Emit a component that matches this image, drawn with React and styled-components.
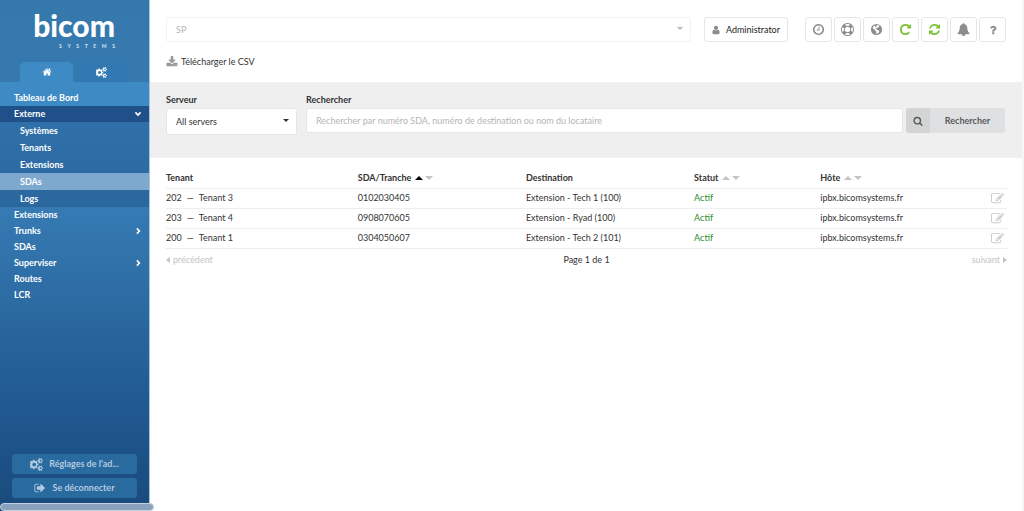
import React, { useState } from "react";
import styled, { createGlobalStyle } from "styled-components";

const colors = {
  text: "#333333",
  muted: "#999999",
  border: "#e6e6e6",
  line: "#eeeeee",
  panel: "#efefef",
  green: "#7cc433",
  active: "#2f8a2f",
};

const GlobalStyle = createGlobalStyle`
  * {
    box-sizing: border-box;
  }

  body {
    margin: 0;
    background: #ffffff;
    color: ${colors.text};
    font-family: Lato, "Liberation Sans", sans-serif;
    font-size: 9px;
    line-height: 16px;
  }

  button,
  input,
  select {
    font: inherit;
    color: inherit;
  }

  a {
    color: inherit;
    text-decoration: none;
  }
`;

const Page = styled.div`
  display: flex;
  min-height: 100vh;
`;

/* ---------- Sidebar ---------- */

const Sidebar = styled.aside`
  position: relative;
  flex: 0 0 150px;
  display: flex;
  flex-direction: column;
  padding-bottom: 13px;
  border-right: 1px solid #a9c4de;
  background: linear-gradient(#3578ac 0%, #367bb4 40%, #2c6aa2 60%, #215a92 78%, #194a7c 100%);
  color: #ffffff;
  font-weight: 700;
`;

const Logo = styled.a`
  display: flex;
  flex-direction: column;
  align-items: flex-end;
  margin: 7px 34px 0 0;
  font-size: 30px;
  font-weight: 900;
  line-height: 36px;
`;

const LogoSub = styled.span`
  display: flex;
  justify-content: space-between;
  width: 56px;
  font-size: 5px;
  font-weight: 700;
  line-height: 6px;
  opacity: 0.8;
`;

const Tabs = styled.div`
  display: flex;
  gap: 2px;
  padding: 0 21px 0 20px;
  margin-top: 13px;
`;

const Tab = styled.button`
  flex: 1;
  height: 20px;
  padding: 0;
  border: 0;
  border-radius: 5px 5px 0 0;
  background: ${(props) => (props.$active ? "#3e8ac4" : "#3379b1")};
  display: flex;
  align-items: center;
  justify-content: center;
  cursor: pointer;
`;

const Menu = styled.ul`
  list-style: none;
  margin: 0;
  padding: 0;
`;

const MenuLink = styled.a`
  display: flex;
  align-items: center;
  justify-content: space-between;
  height: ${(props) => (props.$home ? 24 : 16)}px;
  padding: ${(props) => (props.$home ? "8px 7px 0 14px" : "0 7px 0 14px")};
  background: ${(props) =>
    props.$home ? "#3e8ac4" : props.$open ? "#20508a" : "transparent"};
`;

const SubMenu = styled(Menu)`
  background: linear-gradient(#3070aa, #2a679e);
`;

const SubLink = styled.a`
  display: block;
  height: 17px;
  line-height: 17px;
  padding-left: 20px;
  background: ${(props) => (props.$current ? "#7ea9cf" : "transparent")};
`;

const SideActions = styled.div`
  display: flex;
  flex-direction: column;
  gap: 4px;
  margin-top: auto;
  padding: 0 12px;
`;

const SideButton = styled.button`
  display: flex;
  align-items: center;
  justify-content: center;
  gap: 6px;
  height: 20px;
  padding: 0;
  border: 0;
  border-radius: 3px;
  background: #296a9f;
  color: #b3cbe0;
  font-weight: 700;
  cursor: pointer;
`;

// horizontal scroll thumb, runs slightly past the sidebar
const ScrollThumb = styled.div`
  position: absolute;
  left: 0;
  right: -5px;
  bottom: 0;
  height: 8px;
  border: 1px solid #c3d0de;
  border-radius: 4px;
  background: #8aa2bd;
`;

/* ---------- Top bar ---------- */

const Main = styled.main`
  flex: 1;
  min-width: 0;
  border-right: 2px solid #f7f7f7;
`;

const TopBar = styled.header`
  display: flex;
  align-items: center;
  padding: 17px 16px 0;
`;

const SelectBox = styled.div`
  position: relative;
  flex: ${(props) => (props.$wide ? "1" : "0 0 131px")};
  color: ${(props) => (props.$wide ? "#b5b5b5" : colors.text)};
`;

const Select = styled.select`
  appearance: none;
  display: block;
  width: 100%;
  height: ${(props) => (props.$wide ? 25 : 27)}px;
  padding: 0 20px 0 9px;
  border: 1px solid ${(props) => (props.$wide ? "#f2f2f2" : colors.border)};
  border-radius: 3px;
  background: #ffffff;
  opacity: 1;
`;

const Caret = styled.span`
  position: absolute;
  top: 50%;
  right: 8px;
  margin-top: -3px;
  border: 3px solid transparent;
  border-top-color: currentColor;
  border-bottom: 0;
  pointer-events: none;
`;

const UserButton = styled.button`
  display: flex;
  align-items: center;
  gap: 5px;
  height: 25px;
  margin: 0 17px 0 13px;
  padding: 0 7px 0 6px;
  border: 1px solid ${colors.border};
  border-radius: 3px;
  background: #ffffff;
  color: #222222;
  cursor: pointer;

  svg {
    color: #8c8c8c;
  }
`;

const Tools = styled.div`
  display: flex;
  gap: 2px;
`;

const ToolButton = styled.button`
  display: flex;
  align-items: center;
  justify-content: center;
  width: 27px;
  height: 25px;
  padding: 0;
  border: 1px solid ${colors.border};
  border-radius: 3px;
  background: #ffffff;
  color: ${(props) => (props.$green ? colors.green : "#8c8c8c")};
  cursor: pointer;
`;

const Download = styled.a`
  display: inline-flex;
  align-items: center;
  gap: 3px;
  margin: 12px 16px;

  svg {
    color: ${colors.muted};
  }
`;

/* ---------- Search ---------- */

const SearchForm = styled.form`
  display: flex;
  align-items: flex-start;
  padding: 10px 17px 23px 16px;
  background: ${colors.panel};
`;

const Field = styled.div`
  flex: ${(props) => (props.$grow ? "1" : "0 0 131px")};
  margin-right: ${(props) => (props.$grow ? 3 : 9)}px;
`;

const Label = styled.label`
  display: block;
  font-weight: 700;
`;

const SearchInput = styled.input`
  display: block;
  width: 100%;
  height: 25px;
  padding: 0 9px;
  border: 1px solid ${colors.border};
  border-radius: 3px;
  background: #ffffff;

  &::placeholder {
    color: #b5b5b5;
  }
`;

const SearchButton = styled.button`
  display: flex;
  align-items: center;
  width: 99px;
  height: 25px;
  margin-top: 16px;
  padding: 0;
  border: 0;
  border-radius: 3px;
  overflow: hidden;
  background: #dfe0e1;
  color: #5a5a5a;
  font-weight: 700;
  cursor: pointer;

  span {
    flex: 1;
  }
`;

const SearchIcon = styled.i`
  display: flex;
  align-items: center;
  justify-content: center;
  width: 24px;
  height: 100%;
  background: #d3d4d4;
`;

/* ---------- Table ---------- */

const Results = styled.section`
  padding: 10px 15px 0 16px;
`;

const Table = styled.table`
  width: 100%;
  table-layout: fixed;
  border-collapse: collapse;

  th,
  td {
    height: 20px;
    padding: 0;
    border-bottom: 1px solid ${colors.line};
    text-align: left;
    white-space: nowrap;
  }
`;

const Th = styled.th`
  width: ${(props) => props.$width};
  font-weight: 700;
`;

const Sort = styled.span`
  display: inline-block;
  margin-left: ${(props) => (props.$down ? 2 : 4)}px;
  vertical-align: middle;
  border: 4px solid transparent;
  border-width: ${(props) => (props.$down ? "4px 4px 0" : "0 4px 4px")};
  border-top-color: ${(props) => (props.$down ? "#c4c4c4" : "transparent")};
  border-bottom-color: ${(props) => (props.$on ? "#000000" : "#c4c4c4")};
`;

const Dash = styled.span`
  margin: 0 5px;
`;

const Status = styled.span`
  color: ${colors.active};
`;

const EditLink = styled.a`
  display: flex;
  justify-content: flex-end;
  padding-right: 3px;
  color: #cccccc;
`;

const Pager = styled.nav`
  display: grid;
  grid-template-columns: 1fr auto 1fr;
  padding-top: 3px;
`;

const PagerButton = styled.button`
  display: flex;
  align-items: center;
  justify-self: ${(props) => (props.$next ? "end" : "start")};
  gap: 3px;
  padding: 0;
  border: 0;
  background: none;
  color: #c4c4c4;
`;

const Arrow = styled.i`
  border: 3px solid transparent;
  border-width: ${(props) => (props.$next ? "3px 0 3px 4px" : "3px 4px 3px 0")};
  border-left-color: currentColor;
  border-right-color: currentColor;
`;

const PATHS = {
  home: "M1472 992v480q0 26-19 45t-45 19h-384v-384h-256v384h-384q-26 0-45-19t-19-45v-480q0-1 .5-3t.5-3l575-474 575 474q1 2 1 6zm223-69l-62 74q-8 9-21 11h-3q-13 0-21-7l-692-577-692 577q-12 8-24 7-13-2-21-11l-62-74q-8-10-7-23.5t11-21.5l719-599q32-26 76-26t76 26l244 204v-195q0-14 9-23t23-9h192q14 0 23 9t9 23v408l219 182q10 8 11 21.5t-7 23.5z",
  cogs: "M832 896q0-106-75-181t-181-75-181 75-75 181 75 181 181 75 181-75 75-181zm768 512q0-52-38-90t-90-38-90 38-38 90q0 53 37.5 90.5t90.5 37.5 90.5-37.5 37.5-90.5zm0-1024q0-52-38-90t-90-38-90 38-38 90q0 53 37.5 90.5t90.5 37.5 90.5-37.5 37.5-90.5zm-448 421v185q0 10-7 19.5t-16 10.5l-155 24q-11 35-32 76 34 48 90 115 7 11 7 20 0 12-7 19-23 30-82.5 89.5t-78.5 59.5q-11 0-21-7l-115-90q-37 19-77 31-11 108-23 155-7 24-30 24h-186q-11 0-20-7.5t-10-17.5l-23-153q-34-10-75-31l-118 89q-7 7-20 7-11 0-21-8-144-133-144-160 0-9 7-19 10-14 41-53t47-61q-23-44-35-82l-152-24q-10-1-17-9.5t-7-19.5v-185q0-10 7-19.5t16-10.5l155-24q11-35 32-76-34-48-90-115-7-11-7-20 0-12 7-20 22-30 82-89t79-59q11 0 21 7l115 90q34-18 77-32 11-108 23-154 7-24 30-24h186q11 0 20 7.5t10 17.5l23 153q34 10 75 31l118-89q8-7 20-7 11 0 21 8 144 133 144 160 0 8-7 19-12 16-42 54t-45 60q23 48 34 82l152 23q10 2 17 10.5t7 19.5zm640 533v140q0 16-149 31-12 27-30 52 51 113 51 138 0 4-4 7-122 71-124 71-8 0-46-47t-52-68q-20 2-30 2t-30-2q-14 21-52 68t-46 47q-2 0-124-71-4-3-4-7 0-25 51-138-18-25-30-52-149-15-149-31v-140q0-16 149-31 13-29 30-52-51-113-51-138 0-4 4-7 4-2 35-20t59-34 30-16q8 0 46 46.5t52 67.5q20-2 30-2t30 2q51-71 92-112l6-2q4 0 124 70 4 3 4 7 0 25-51 138 17 23 30 52 149 15 149 31zm0-1024v140q0 16-149 31-12 27-30 52 51 113 51 138 0 4-4 7-122 71-124 71-8 0-46-47t-52-68q-20 2-30 2t-30-2q-14 21-52 68t-46 47q-2 0-124-71-4-3-4-7 0-25 51-138-18-25-30-52-149-15-149-31v-140q0-16 149-31 13-29 30-52-51-113-51-138 0-4 4-7 4-2 35-20t59-34 30-16q8 0 46 46.5t52 67.5q20-2 30-2t30 2q51-71 92-112l6-2q4 0 124 70 4 3 4 7 0 25-51 138 17 23 30 52 149 15 149 31z",
  signOut:
    "M704 1440q0 4 1 20t.5 26.5-3 23.5-10 19.5-20.5 6.5h-320q-119 0-203.5-84.5t-84.5-203.5v-704q0-119 84.5-203.5t203.5-84.5h320q13 0 22.5 9.5t9.5 22.5q0 4 1 20t.5 26.5-3 23.5-10 19.5-20.5 6.5h-320q-66 0-113 47t-47 113v704q0 66 47 113t113 47h312l11.5 1 11.5 3 8 5.5 7 9 2 13.5zm928-544q0 26-19 45l-544 544q-19 19-45 19t-45-19-19-45v-288h-448q-26 0-45-19t-19-45v-384q0-26 19-45t45-19h448v-288q0-26 19-45t45-19 45 19l544 544q19 19 19 45z",
  user: "M1536 1399q0 109-62.5 187t-150.5 78h-854q-88 0-150.5-78t-62.5-187q0-85 8.5-160.5t31.5-152 58.5-131 94-89 134.5-34.5q131 128 313 128t313-128q76 0 134.5 34.5t94 89 58.5 131 31.5 152 8.5 160.5zm-256-887q0 159-112.5 271.5t-271.5 112.5-271.5-112.5-112.5-271.5 112.5-271.5 271.5-112.5 271.5 112.5 112.5 271.5z",
  download:
    "M1344 1344q0-26-19-45t-45-19-45 19-19 45 19 45 45 19 45-19 19-45zm256 0q0-26-19-45t-45-19-45 19-19 45 19 45 45 19 45-19 19-45zm128-224v320q0 40-28 68t-68 28h-1472q-40 0-68-28t-28-68v-320q0-40 28-68t68-28h465l135 136q58 56 136 56t136-56l136-136h464q40 0 68 28t28 68zm-325-569q17 41-14 70l-448 448q-18 19-45 19t-45-19l-448-448q-31-29-14-70 17-39 59-39h256v-448q0-26 19-45t45-19h256q26 0 45 19t19 45v448h256q42 0 59 39z",
  clock: "M1024 544v448q0 14-9 23t-23 9h-320q-14 0-23-9t-9-23v-64q0-14 9-23t23-9h224v-352q0-14 9-23t23-9h64q14 0 23 9t9 23zm416 352q0-148-73-273t-198-198-273-73-273 73-198 198-73 273 73 273 198 198 273 73 273-73 198-198 73-273zm224 0q0 209-103 385.5t-279.5 279.5-385.5 103-385.5-103-279.5-279.5-103-385.5 103-385.5 279.5-279.5 385.5-103 385.5 103 279.5 279.5 103 385.5z",
  ring: "M896 0q182 0 348 71t286 191 191 286 71 348-71 348-191 286-286 191-348 71-348-71-286-191-191-286-71-348 71-348 191-286 286-191 348-71zm0 128q-190 0-361 90l194 194q82-28 167-28t167 28l194-194q-171-90-361-90zm-678 1129l194-194q-28-82-28-167t28-167l-194-194q-90 171-90 361t90 361zm678 407q190 0 361-90l-194-194q-82 28-167 28t-167-28l-194 194q171 90 361 90zm0-384q159 0 271.5-112.5t112.5-271.5-112.5-271.5-271.5-112.5-271.5 112.5-112.5 271.5 112.5 271.5 271.5 112.5zm484-217l194 194q90-171 90-361t-90-361l-194 194q28 82 28 167t-28 167z",
  globe: "M896 128a768 768 0 1 0 0 1536a768 768 0 1 0 0-1536zM980 290l180 20 170 110-110 60-40 120-130 20-120 110-130-20-40 90 170 60 60 110 170 30 120 120-40 170-160 150-170 90-60-170 30-180-130-90-70-160-190-110-110-170 50-120 110-120 120-60 60 70-50 120 110 20 100-90z",
  repeat: "M1664 256v448q0 26-19 45t-45 19h-448q-42 0-59-40-17-39 14-69l138-138q-148-137-349-137-104 0-198.5 40.5t-163.5 109.5-109.5 163.5-40.5 198.5 40.5 198.5 109.5 163.5 163.5 109.5 198.5 40.5q119 0 225-52t179-147q7-10 23-12 15 0 25 9l137 138q9 8 9.5 20.5t-7.5 22.5q-109 132-264 204.5t-327 72.5q-156 0-298-61t-245-164-164-245-61-298 61-298 164-245 245-164 298-61q147 0 284.5 55.5t244.5 156.5l130-129q29-31 70-14 39 17 39 59z",
  refresh:
    "M1639 1056q0 5-1 7-64 268-268 434.5t-478 166.5q-146 0-282.5-55t-243.5-157l-129 129q-19 19-45 19t-45-19-19-45v-448q0-26 19-45t45-19h448q26 0 45 19t19 45-19 45l-137 137q71 66 161 102t187 36q134 0 250-65t186-179q11-17 53-117 8-23 30-23h192q13 0 22.5 9.5t9.5 22.5zm25-800v448q0 26-19 45t-45 19h-448q-26 0-45-19t-19-45 19-45l138-138q-148-137-349-137-134 0-250 65t-186 179q-11 17-53 117-8 23-30 23h-199q-13 0-22.5-9.5t-9.5-22.5v-7q65-268 270-434.5t480-166.5q146 0 284 55.5t245 156.5l130-129q19-19 45-19t45 19 19 45z",
  bell: "M912 1696q0-16-16-16-59 0-101.5-42.5t-42.5-101.5q0-16-16-16t-16 16q0 73 51.5 124.5t124.5 51.5q16 0 16-16zm816-288q0 52-38 90t-90 38h-448q0 106-75 181t-181 75-181-75-75-181h-448q-52 0-90-38t-38-90q50-42 91-88t85-119.5 74.5-158.5 50-206 19.5-260q0-152 117-282.5t307-158.5q-8-19-8-39 0-40 28-68t68-28 68 28 28 68q0 20-8 39 190 28 307 158.5t117 282.5q0 139 19.5 260t50 206 74.5 158.5 85 119.5 91 88z",
  question:
    "M1088 1256v240q0 16-12 28t-28 12h-240q-16 0-28-12t-12-28v-240q0-16 12-28t28-12h240q16 0 28 12t12 28zm316-600q0 54-15.5 101t-35 76.5-55 59.5-57.5 43.5-61 35.5q-41 23-68.5 65t-27.5 67q0 17-12 32.5t-28 15.5h-240q-15 0-25.5-18.5t-10.5-37.5v-45q0-83 65-156.5t143-108.5q59-27 84-56t25-76q0-42-46.5-74t-107.5-32q-65 0-108 29-35 25-107 115-13 16-31 16-12 0-25-8l-164-125q-13-10-15.5-25t5.5-28q160-266 464-266 80 0 161 31t146 83 106 127.5 41 158.5z",
  search:
    "M1216 832q0-185-131.5-316.5t-316.5-131.5-316.5 131.5-131.5 316.5 131.5 316.5 316.5 131.5 316.5-131.5 131.5-316.5zm512 832q0 52-38 90t-90 38q-54 0-90-38l-343-342q-179 124-399 124-143 0-273.5-55.5t-225-150-150-225-55.5-273.5 55.5-273.5 150-225 225-150 273.5-55.5 273.5 55.5 225 150 150 225 55.5 273.5q0 220-124 399l343 343q37 37 37 90z",
  edit: "M888 1184l116-116-152-152-116 116v56h96v96h56zm440-720q-16-16-33 1l-350 350q-17 17-1 33t33-1l350-350q17-17 1-33zm80 594v190q0 119-84.5 203.5t-203.5 84.5h-832q-119 0-203.5-84.5t-84.5-203.5v-832q0-119 84.5-203.5t203.5-84.5h832q63 0 117 25 15 7 18 23 3 17-9 29l-49 49q-14 14-32 8-23-6-45-6h-832q-66 0-113 47t-47 113v832q0 66 47 113t113 47h832q66 0 113-47t47-113v-126q0-13 9-22l64-64q15-15 35-7t20 29zm-96-738l288 288-672 672h-288v-288zm444 132l-92 92-288-288 92-92q28-28 68-28t68 28l152 152q28 28 28 68t-28 68z",
};

const Icon = ({ name, size = 12 }) => (
  <svg width={size} height={size} viewBox="0 0 1792 1792" fill="currentColor" fillRule="evenodd" aria-hidden="true">
    <path d={PATHS[name]} />
  </svg>
);

const Chevron = ({ open }) => (
  <svg width="8" height="8" viewBox="0 0 8 8" fill="none" stroke="currentColor" strokeWidth="1.6" aria-hidden="true">
    <path d={open ? "M1.4 2.4L4 5l2.6-2.6" : "M2.8 1.4L5.4 4 2.8 6.6"} />
  </svg>
);

const MENU = [
  { label: "Tableau de Bord", home: true },
  {
    label: "Externe",
    open: true,
    children: ["Systèmes", "Tenants", "Extensions", "SDAs", "Logs"],
  },
  { label: "Extensions" },
  { label: "Trunks", more: true },
  { label: "SDAs" },
  { label: "Superviser", more: true },
  { label: "Routes" },
  { label: "LCR" },
];

const TOOLS = [
  { icon: "clock", label: "Heure", size: 13 },
  { icon: "ring", label: "Assistance", size: 13 },
  { icon: "globe", label: "Langue", size: 13 },
  { icon: "repeat", label: "Recharger", green: true, size: 13 },
  { icon: "refresh", label: "Synchroniser", green: true, size: 13 },
  { icon: "bell", label: "Notifications", size: 13 },
  { icon: "question", label: "Aide" },
];

const COLUMNS = [
  { label: "Tenant", width: "22.8%" },
  { label: "SDA/Tranche", width: "20%", sort: "asc" },
  { label: "Destination", width: "20%" },
  { label: "Statut", width: "15%", sort: "none" },
  { label: "Hôte", width: "16%", sort: "none" },
];

const ROWS = [
  { code: "202", tenant: "Tenant 3", sda: "0102030405", destination: "Extension - Tech 1 (100)" },
  { code: "203", tenant: "Tenant 4", sda: "0908070605", destination: "Extension - Ryad (100)" },
  { code: "200", tenant: "Tenant 1", sda: "0304050607", destination: "Extension - Tech 2 (101)" },
];

const App = () => {
  const [tab, setTab] = useState("home");
  const [query, setQuery] = useState("");

  return (
    <Page>
      <GlobalStyle />

      <Sidebar>
        <Logo href="#">
          bicom
          <LogoSub>
            {"SYSTEMS".split("").map((letter, i) => (
              <span key={i}>{letter}</span>
            ))}
          </LogoSub>
        </Logo>

        <Tabs>
          <Tab $active={tab === "home"} onClick={() => setTab("home")} aria-label="Accueil">
            <Icon name="home" size={10} />
          </Tab>
          <Tab $active={tab === "settings"} onClick={() => setTab("settings")} aria-label="Réglages">
            <Icon name="cogs" size={11} />
          </Tab>
        </Tabs>

        <Menu>
          {MENU.map((item) => (
            <li key={item.label}>
              <MenuLink href="#" $home={item.home} $open={item.open}>
                {item.label}
                {(item.open || item.more) && <Chevron open={item.open} />}
              </MenuLink>
              {item.children && (
                <SubMenu>
                  {item.children.map((child) => (
                    <li key={child}>
                      <SubLink href="#" $current={child === "SDAs"}>
                        {child}
                      </SubLink>
                    </li>
                  ))}
                </SubMenu>
              )}
            </li>
          ))}
        </Menu>

        <SideActions>
          <SideButton>
            <Icon name="cogs" size={13} />
            Réglages de l'ad...
          </SideButton>
          <SideButton>
            <Icon name="signOut" />
            Se déconnecter
          </SideButton>
        </SideActions>
        <ScrollThumb />
      </Sidebar>

      <Main>
        <TopBar>
          <SelectBox $wide>
            <Select $wide disabled aria-label="Système">
              <option>SP</option>
            </Select>
            <Caret />
          </SelectBox>
          <UserButton>
            <Icon name="user" size={10} />
            Administrator
          </UserButton>
          <Tools>
            {TOOLS.map((tool) => (
              <ToolButton key={tool.icon} $green={tool.green} aria-label={tool.label}>
                <Icon name={tool.icon} size={tool.size} />
              </ToolButton>
            ))}
          </Tools>
        </TopBar>

        <Download href="#">
          <Icon name="download" />
          Télécharger le CSV
        </Download>

        <SearchForm onSubmit={(e) => e.preventDefault()}>
          <Field>
            <Label htmlFor="server">Serveur</Label>
            <SelectBox>
              <Select id="server">
                <option>All servers</option>
              </Select>
              <Caret />
            </SelectBox>
          </Field>
          <Field $grow>
            <Label htmlFor="query">Rechercher</Label>
            <SearchInput
              id="query"
              value={query}
              onChange={(e) => setQuery(e.target.value)}
              placeholder="Rechercher par numéro SDA, numéro de destination ou nom du locataire"
            />
          </Field>
          <SearchButton type="submit">
            <SearchIcon>
              <Icon name="search" size={10} />
            </SearchIcon>
            <span>Rechercher</span>
          </SearchButton>
        </SearchForm>

        <Results>
          <Table>
            <thead>
              <tr>
                {COLUMNS.map((col) => (
                  <Th key={col.label} $width={col.width}>
                    {col.label}
                    {col.sort && (
                      <>
                        <Sort $on={col.sort === "asc"} />
                        <Sort $down />
                      </>
                    )}
                  </Th>
                ))}
                <Th />
              </tr>
            </thead>
            <tbody>
              {ROWS.map((row) => (
                <tr key={row.code}>
                  <td>
                    {row.code}
                    <Dash>—</Dash>
                    {row.tenant}
                  </td>
                  <td>{row.sda}</td>
                  <td>{row.destination}</td>
                  <td>
                    <Status>Actif</Status>
                  </td>
                  <td>ipbx.bicomsystems.fr</td>
                  <td>
                    <EditLink href="#" aria-label="Modifier">
                      <Icon name="edit" size={13} />
                    </EditLink>
                  </td>
                </tr>
              ))}
            </tbody>
          </Table>

          <Pager>
            <PagerButton>
              <Arrow />
              précédent
            </PagerButton>
            <span>Page 1 de 1</span>
            <PagerButton $next>
              suivant
              <Arrow $next />
            </PagerButton>
          </Pager>
        </Results>
      </Main>
    </Page>
  );
};

export default App;
